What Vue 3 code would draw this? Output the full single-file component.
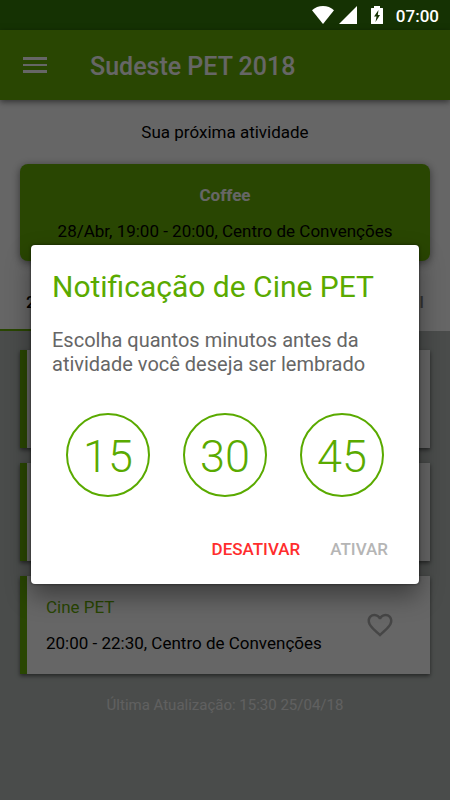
<script setup>
import { ref } from 'vue'

const tabs = ref([
  { label: '2', side: 'start', active: true },
  { label: 'I', side: 'end', active: false },
])

const activities = ref([
  { id: 1 },
  { id: 2 },
  { id: 3, title: 'Cine PET', detail: '20:00 - 22:30, Centro de Convenções' },
])

const options = [15, 30, 45]
const selected = ref(null)
</script>

<template>
  <div class="screen">
    <div class="status">
      <svg class="wifi" width="22" height="18" viewBox="0 0 22 18" aria-hidden="true">
        <path d="M11 18 0 4.2C3 1.600 6.800 0 11 0s8 1.600 11 4.200z" />
      </svg>
      <svg class="signal" width="18" height="18" viewBox="0 0 18 18" aria-hidden="true">
        <path d="M18 0v18H0z" />
      </svg>
      <svg class="battery" width="12" height="18" viewBox="0 0 12 18" aria-hidden="true">
        <path fill-rule="evenodd" d="M3 0h6v2h2.500q.5 0 .5.500v15q0 .5-.5.500H.5q-.5 0-.5-.5v-15Q0 2 .5 2H3zM7.500 4 3 10.500h2.500L4.500 16 9 9H6.800z" />
      </svg>
      <span class="clock">07:00</span>
    </div>

    <header class="appbar">
      <button class="menu" type="button" aria-label="Menu">
        <svg width="24" height="16" viewBox="0 0 24 16" aria-hidden="true">
          <path d="M0 0h24v3H0zM0 7h24v2H0zM0 13h24v3H0z" />
        </svg>
      </button>
      <h1>Sudeste PET 2018</h1>
    </header>

    <main class="content">
      <section class="next">
        <h2>Sua próxima atividade</h2>
        <div class="next-card">
          <strong>Coffee</strong>
          <span>28/Abr, 19:00 - 20:00, Centro de Convenções</span>
        </div>
      </section>

      <nav class="tabs">
        <button
          v-for="tab in tabs"
          :key="tab.label"
          type="button"
          class="tab"
          :class="[tab.side, { active: tab.active }]"
        >{{ tab.label }}</button>
      </nav>

      <section class="list">
        <article v-for="item in activities" :key="item.id" class="activity">
          <div v-if="item.title" class="info">
            <h3>{{ item.title }}</h3>
            <p>{{ item.detail }}</p>
          </div>
          <button v-if="item.title" class="fav" type="button" aria-label="Favoritar">
            <svg width="30" height="30" viewBox="0 0 24 24" aria-hidden="true">
              <path d="M16.500 3c-1.740 0-3.410.81-4.500 2.090C10.910 3.810 9.240 3 7.500 3 4.420 3 2 5.420 2 8.500c0 3.780 3.400 6.860 8.550 11.540L12 21.350l1.450-1.320C18.600 15.360 22 12.280 22 8.500 22 5.420 19.580 3 16.500 3zm-4.400 15.550l-.1.1-.1-.1C7.140 14.240 4 11.390 4 8.500 4 6.500 5.500 5 7.500 5c1.540 0 3.040.99 3.570 2.360h1.870C13.460 5.990 14.960 5 16.500 5c2 0 3.500 1.500 3.500 3.500 0 2.890-3.140 5.740-7.900 10.050z" />
            </svg>
          </button>
        </article>
        <p class="updated">Última Atualização: 15:30 25/04/18</p>
      </section>
    </main>

    <div class="overlay">
      <section class="dialog" role="dialog" aria-modal="true" aria-labelledby="dialog-title">
        <h2 id="dialog-title">Notificação de Cine PET</h2>
        <p>Escolha quantos minutos antes da atividade você deseja ser lembrado</p>
        <div class="options">
          <button v-for="n in options" :key="n" type="button" @click="selected = n">{{ n }}</button>
        </div>
        <div class="actions">
          <button type="button" class="off" @click="selected = null">DESATIVAR</button>
          <button type="button" class="on" :disabled="selected === null">ATIVAR</button>
        </div>
      </section>
    </div>
  </div>
</template>

<style>
body {
  background: #494c4b;
}
</style>

<style scoped>
.screen {
  position: relative;
  display: flex;
  flex-direction: column;
  min-height: 100vh;
  font-family: Roboto, "Liberation Sans", sans-serif;
  color: #000;
}
h1,
h2,
h3,
p {
  margin: 0;
  font-weight: 400;
}
button {
  margin: 0;
  padding: 0;
  border: 0;
  background: none;
  color: inherit;
  font-family: inherit;
  cursor: pointer;
}
svg {
  display: block;
  fill: currentColor;
}

.status {
  display: flex;
  align-items: center;
  justify-content: flex-end;
  height: 30px;
  padding-right: 11px;
  background: #153203;
  color: #fff;
}
.signal {
  margin-left: 5px;
}
.battery {
  margin-left: 14px;
}
.clock {
  margin-left: 13px;
  padding-top: 2px;
  font-size: 17px;
  line-height: 28px;
  font-weight: 500;
}

.appbar {
  position: relative;
  display: flex;
  align-items: center;
  gap: 43px;
  height: 70px;
  padding: 0 23px;
  background: #67af05;
  color: #fff;
  box-shadow: 0 2px 6px rgba(0, 0, 0, 0.5);
}
h1 {
  padding-top: 3px;
  font-size: 25px;
  line-height: 30px;
  font-weight: 500;
}

.content {
  display: flex;
  flex: 1;
  flex-direction: column;
  background: #fff;
}
.next {
  display: flex;
  flex-direction: column;
  gap: 20px;
  padding: 20px 20px 11px;
  text-align: center;
}
.next h2 {
  font-size: 17px;
  line-height: 24px;
}
.next-card {
  display: flex;
  flex-direction: column;
  gap: 12px;
  padding: 19px 0 18px;
  border-radius: 8px;
  background: #67af05;
  box-shadow: 0 2px 8px rgba(0, 0, 0, 0.5);
  font-size: 17px;
  line-height: 24px;
}
.next-card strong {
  color: #fff;
  font-weight: 700;
}

.tabs {
  display: flex;
  justify-content: space-between;
  height: 59px;
}
.tab {
  box-sizing: border-box;
  flex: 0 0 33%;
  padding: 2px 26px 0;
  border-bottom: 2px solid transparent;
  color: #888;
  font-size: 17px;
  font-weight: 500;
}
.tab.active {
  border-color: #67af05;
  color: #000;
}
.tab.start {
  text-align: left;
}
.tab.end {
  text-align: right;
}

.list {
  display: flex;
  flex: 1;
  flex-direction: column;
  gap: 15px;
  padding: 19px 20px;
  background: #b8bebb;
}
.activity {
  display: flex;
  align-items: center;
  justify-content: space-between;
  box-sizing: border-box;
  min-height: 98px;
  padding: 0 35px 0 19px;
  border-left: 7px solid #67af05;
  background: #fff;
  box-shadow: 0 2px 4px rgba(0, 0, 0, 0.5);
}
.info {
  display: flex;
  flex-direction: column;
  gap: 12px;
  font-size: 17px;
  line-height: 24px;
}
.info h3 {
  color: #67af05;
  font-size: 17px;
}
.fav {
  color: #b0b0b0;
}
.updated {
  color: #f0f0f0;
  font-size: 15px;
  line-height: 20px;
  text-align: center;
  padding-top: 6px;
}

.overlay {
  position: absolute;
  inset: 30px 0 0;
  display: grid;
  align-items: center;
  padding: 0 31px 2px;
  background: rgba(0, 0, 0, 0.6);
}
.dialog {
  padding: 22px 21px 20px;
  border-radius: 4px;
  background: #fff;
  box-shadow: 0 12px 24px rgba(0, 0, 0, 0.4), 0 0 3px rgba(0, 0, 0, 0.6);
}
.dialog h2 {
  color: #5aaa00;
  font-size: 30px;
  line-height: 40px;
}
.dialog p {
  margin-top: 21px;
  color: #666;
  font-size: 20px;
  line-height: 24px;
}
.options {
  display: flex;
  justify-content: space-between;
  margin-top: 37px;
  padding: 0 14px;
}
.options button {
  box-sizing: border-box;
  width: 84px;
  height: 84px;
  padding-top: 4px;
  border: 2px solid #5aaa00;
  border-radius: 50%;
  color: #5aaa00;
  font-size: 45px;
  font-weight: 300;
}
.actions {
  display: flex;
  justify-content: flex-end;
  gap: 30px;
  margin-top: 38px;
  padding-right: 10px;
}
.actions button {
  font-size: 17px;
  line-height: 29px;
  font-weight: 500;
}
.actions .off {
  color: #ff2d2d;
}
.actions .on {
  color: #b5b5b5;
}
</style>
